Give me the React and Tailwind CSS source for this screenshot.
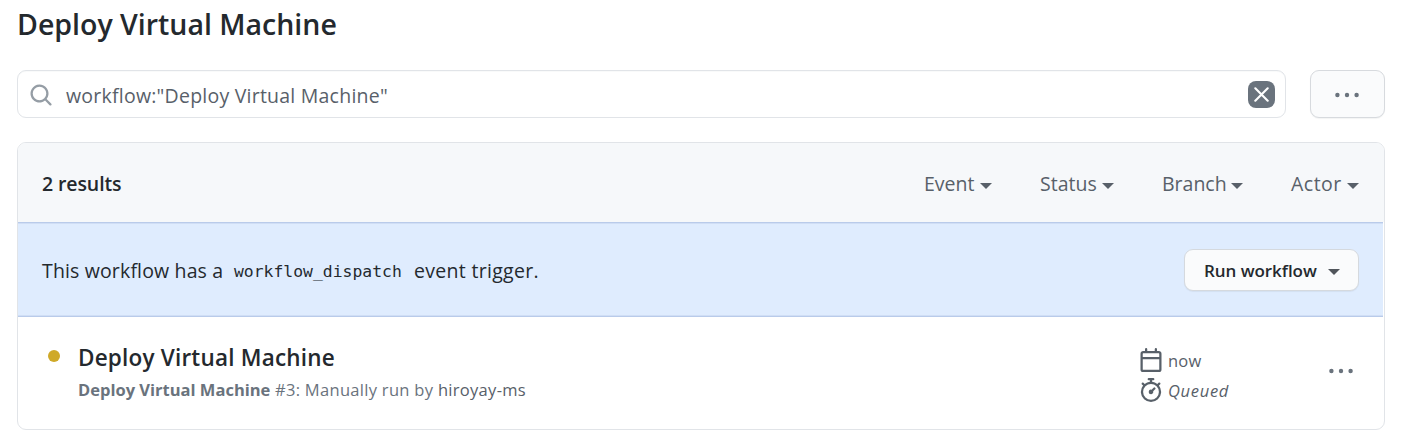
import React from "react";

const Caret = ({ className = "" }) => (
  <svg className={className} width="12" height="6" viewBox="0 0 12 6" fill="currentColor">
    <path d="M0 0h12L6 6z" />
  </svg>
);

const Icon = ({ d, className = "", size = 24 }) => (
  <svg className={"shrink-0 " + className} width={size} height={size} viewBox="0 0 16 16" fill="currentColor" fillRule="evenodd">
    <path d={d} />
  </svg>
);

const Dots = ({ className = "" }) => (
  <svg className={className} width="26" height="6" viewBox="0 0 26 6" fill="currentColor">
    <circle cx="3.4" cy="3" r="2.2" />
    <circle cx="13" cy="3" r="2.2" />
    <circle cx="22.6" cy="3" r="2.2" />
  </svg>
);

const SEARCH = "M11.5 7a4.499 4.499 0 11-8.998 0A4.499 4.499 0 0111.5 7zm-.82 4.74a6 6 0 111.06-1.06l3.04 3.04a.75.75 0 11-1.06 1.06l-3.04-3.04z";
const CALENDAR = "M4.75 0a.75.75 0 01.75.75V2h5V.75a.75.75 0 011.5 0V2h1.25c.966 0 1.75.784 1.75 1.75v10.5A1.75 1.75 0 0113.25 16H2.75A1.75 1.75 0 011 14.25V3.75C1 2.784 1.784 2 2.75 2H4V.75A.75.75 0 014.75 0zm0 3.5h8.5a.25.25 0 01.25.25V6h-11V3.75a.25.25 0 01.25-.25h2zm-2.25 4v6.75c0 .138.112.25.25.25h10.5a.25.25 0 00.25-.25V7.5h-11z";
const STOPWATCH = "M5.75.75A.75.75 0 016.5 0h3a.75.75 0 010 1.5h-.75v1l-.001.041a6.718 6.718 0 013.464 1.435l.007-.006.75-.75a.75.75 0 111.06 1.06l-.75.75-.006.007a6.75 6.75 0 11-10.548 0L2.72 5.03l-.75-.75a.75.75 0 011.06-1.06l.75.75.007.006A6.718 6.718 0 017.25 2.541a.756.756 0 010-.041v-1H6.5a.75.75 0 01-.75-.75zM8 14.5A5.25 5.25 0 108 4a5.25 5.25 0 000 10.5zm.389-6.7l1.33-1.33a.75.75 0 111.061 1.06L9.45 8.861A1.502 1.502 0 018 10.75a1.5 1.5 0 11.389-2.95z";

const Filter = ({ label, className }) => (
  <button className={"flex items-center justify-between " + className}>
    <span className="pt-[2px]">{label}</span>
    <Caret className="mt-[6px]" />
  </button>
);

export default function App() {
  return (
    <main className="h-[447px] w-[1402px] bg-white pl-[17px] pr-[17px] font-['Open_Sans',sans-serif] text-[#24292e] whitespace-nowrap">
      <h1 className="h-[70px] pt-[5px] text-[28.5px] leading-[38px] font-semibold">Deploy Virtual Machine</h1>

      <div className="flex h-12 gap-6">
        <div className="flex w-[1269px] items-center rounded-[9px] border border-[#e1e4e8] pr-[10px] pl-[11px] shadow-[inset_0_1px_0_rgba(225,228,232,0.2)]">
          <Icon d={SEARCH} className="mt-[1px] text-[#959da5]" />
          <span className="ml-[13px] flex-1 pt-[3px] text-[19.5px] tracking-[0.23px] text-[#586069]">workflow:"Deploy Virtual Machine"</span>
          <button className="flex size-[27px] items-center justify-center rounded-[8px] bg-[#6a737d] text-white">
            <svg width="15" height="15" viewBox="0 0 15 15" fill="none" stroke="currentColor" strokeWidth="2.1" strokeLinecap="round">
              <path d="M1.3 1.3l12.4 12.4M13.7 1.3L1.3 13.7" />
            </svg>
          </button>
        </div>
        <button className="flex w-[75px] items-center justify-center rounded-[9px] border border-[#d7dade] bg-[#fafbfc] pt-[2px] pr-[2px] text-[#6a737d] shadow-[0_1px_1px_rgba(27,31,35,0.05)]">
          <Dots />
        </button>
      </div>

      <section className="mt-6 h-[288px] w-[1368px] overflow-hidden rounded-[9px] border border-[#e1e4e8]">
        <header className="flex h-[79px] items-center bg-[#f6f8fa] pr-[25px] pl-6 text-[19.5px] text-[#586069]">
          <span className="flex-1 pt-[2px] font-semibold tracking-[-0.1px] text-[#24292e]">2 results</span>
          <Filter label="Event" className="w-[68px]" />
          <Filter label="Status" className="ml-12 w-[74px]" />
          <Filter label="Branch" className="ml-12 w-[81px]" />
          <Filter label="Actor" className="ml-12 w-[68px] tracking-[0.5px]" />
        </header>

        <div className="mr-[1px] flex h-[95px] items-center border-y border-[#b9cbea] bg-[#dfecfe] pr-6 pl-6 text-[19.5px] shadow-[inset_0_1px_0_#d0def5,inset_0_-1px_0_#d0def5]">
          <span className="w-[192px] pt-[2px] tracking-[0.15px]">This workflow has a</span>
          <code className="w-[169px] pt-[5px] font-['DejaVu_Sans_Mono',monospace] text-[16.4px]">workflow_dispatch</code>
          <span className="ml-[11px] flex-1 pt-[2px] tracking-[0.3px]">event trigger.</span>
          <button className="flex h-[42px] w-[175px] items-center justify-between rounded-[9px] border border-[#d5d9de] bg-[#fafbfc] pr-[18px] pl-[19px] text-[17px] font-semibold shadow-[0_1px_1px_rgba(27,31,35,0.06)]">
            <span className="pt-[2px] tracking-[-0.05px]">Run workflow</span>
            <Caret className="mt-[5px] text-[#50555b]" />
          </button>
        </div>

        <article className="flex h-[112px]">
          <span className="mt-[33px] ml-[30px] size-3 rounded-full bg-[#cfa928]" />
          <div className="ml-[18px] flex-1 pt-[25px]">
            <h2 className="text-[22.5px] leading-[32px] font-semibold tracking-[0.2px]">Deploy Virtual Machine</h2>
            <p className="mt-[3px] text-[16.5px] leading-[26px] tracking-[0.3px] text-[#6a737d]">
              <b className="tracking-normal">Deploy Virtual Machine</b> #3: Manually run by <span className="text-[#586069]">hiroyay-ms</span>
            </p>
          </div>
          <div className="w-[189px] pt-[31px] text-[16.5px] leading-6 text-[#586069]">
            <div className="flex h-[30px] gap-[5px]">
              <Icon d={CALENDAR} />
              <span className="pt-[1px] tracking-[0.2px]">now</span>
            </div>
            <div className="flex gap-[5px]">
              <Icon d={STOPWATCH} />
              <i className="pt-[1px] tracking-[0.7px]">Queued</i>
            </div>
          </div>
          <button className="mr-[30px] flex h-[107px] items-center text-[#6a737d]">
            <Dots />
          </button>
        </article>
      </section>
    </main>
  );
}
